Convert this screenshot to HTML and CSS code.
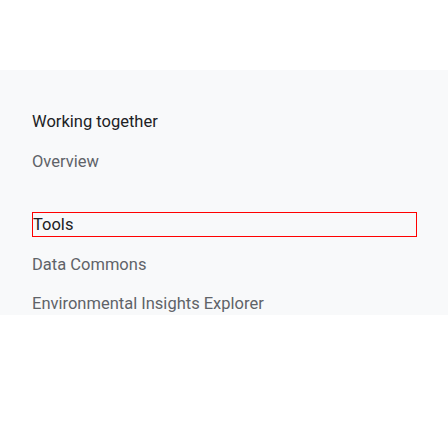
FILE: index.html
```html
<!DOCTYPE html>
<html>
<head>
<meta charset="utf-8">
<link rel="stylesheet" href="styles.css">
</head>
<body>
<div class="top"></div>
<nav class="panel">
  <div class="heading">Working together</div>
  <a class="link first" href="#">Overview</a>
  <div class="heading focused">Tools</div>
  <a class="link data" href="#">Data Commons</a>
  <a class="link env" href="#">Environmental Insights Explorer</a>
</nav>
</body>
</html>
```
FILE: styles.css
```css
html, body {
  margin: 0;
  padding: 0;
  background: #ffffff;
  font-family: Roboto, "Noto Sans", sans-serif;
}
.top {
  height: 70px;
}
.panel {
  background: #f8f9fa;
  padding: 40px 31px 0 32px;
  height: 205px;
  display: flex;
  flex-direction: column;
  overflow: hidden;
}
.heading {
  font-size: 16.5px;
  line-height: 24px;
  color: #202124;
}
.link {
  display: block;
  font-size: 16.5px;
  line-height: 24px;
  color: #5f6368;
  text-decoration: none;
}
.first {
  margin-top: 16px;
}
.focused {
  margin-top: 38px;
  border: 1px solid #ff0000;
  line-height: 23px;
}
.data {
  margin-top: 16px;
}
.env {
  margin-top: 15px;
}
```
